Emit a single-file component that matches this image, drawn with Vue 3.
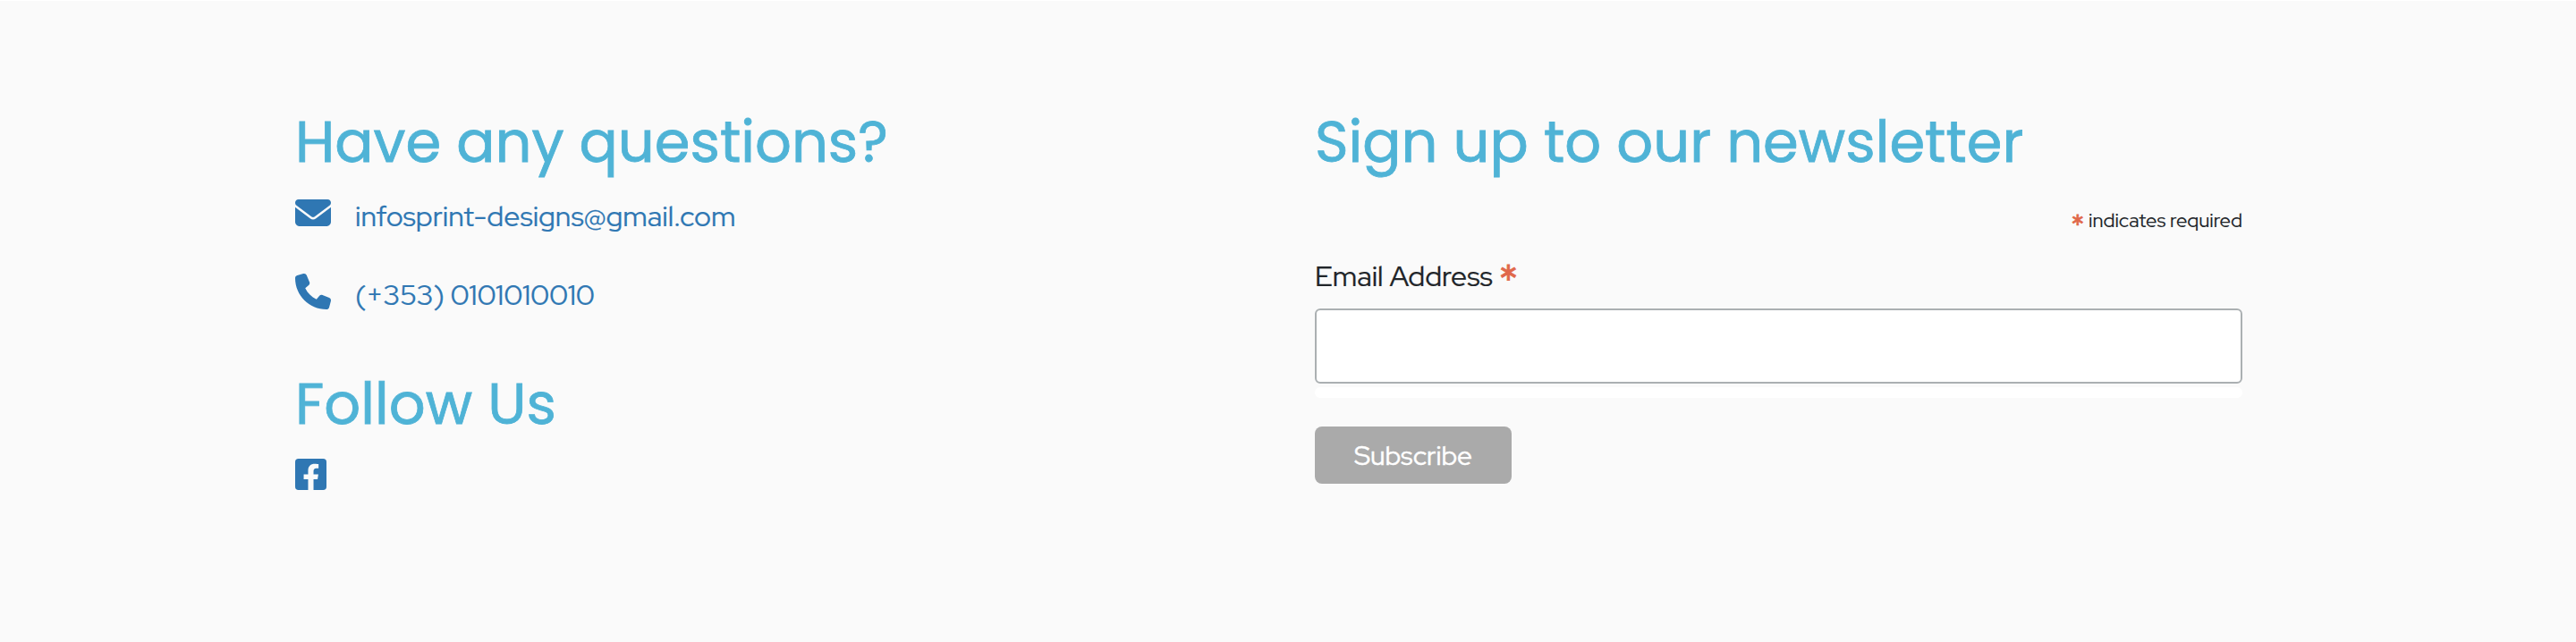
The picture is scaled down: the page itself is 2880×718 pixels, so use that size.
<script setup>
import { ref } from 'vue'
const email = ref('')
</script>

<template>
  <footer class="footer">
    <section class="contact">
      <h2 class="title">Have any questions?</h2>
      <a class="line">
        <svg class="icon" viewBox="0 0 512 512"><path d="M48 64C21.500 64 0 85.500 0 112c0 15.100 7.100 29.300 19.200 38.400L236.800 313.600c11.400 8.500 27 8.500 38.400 0L492.800 150.400c12.100-9.100 19.200-23.300 19.200-38.400c0-26.500-21.500-48-48-48H48zM0 176V384c0 35.300 28.700 64 64 64H448c35.300 0 64-28.700 64-64V176L294.400 339.200c-22.800 17.100-54 17.100-76.800 0L0 176z" /></svg>
        <span>infosprint-designs@gmail.com</span>
      </a>
      <a class="line">
        <svg class="icon" viewBox="0 0 512 512"><path d="M164.900 24.600c-7.700-18.600-28-28.500-47.400-23.200l-88 24C12.100 30.200 0 46 0 64C0 311.400 200.600 512 448 512c18 0 33.800-12.100 38.600-29.500l24-88c5.300-19.400-4.600-39.700-23.200-47.400l-96-40c-16.300-6.800-35.200-2.100-46.300 11.600L304.700 368C234.300 334.700 177.300 277.700 144 207.300L193.300 167c13.700-11.200 18.400-30 11.600-46.300l-40-96z" /></svg>
        <span class="phone">(+353) 0101010010</span>
      </a>
      <h2 class="title follow">Follow Us</h2>
      <svg class="social" viewBox="0 32 448 448"><path d="M400 32H48A48 48 0 0 0 0 80v352a48 48 0 0 0 48 48h137.250V327.690h-63V256h63v-54.640c0-62.150 37-96.480 93.670-96.480 27.140 0 55.520 4.840 55.520 4.840v61h-31.270c-30.810 0-40.420 19.120-40.420 38.730V256h68.780l-11 71.690h-57.780V480H400a48 48 0 0 0 48-48V80a48 48 0 0 0-48-48z" /></svg>
    </section>

    <form class="newsletter" @submit.prevent>
      <h2 class="title">Sign up to our newsletter</h2>
      <p class="required"><span class="star">*</span> indicates required</p>
      <label class="label" for="email">Email Address <span class="star">*</span></label>
      <input id="email" v-model="email" class="field" type="email">
      <div class="response"></div>
      <button class="subscribe" type="submit">Subscribe</button>
    </form>
  </footer>
</template>

<style>
body {
  background: #fafafa;
}
</style>

<style scoped>
.footer {
  box-sizing: border-box;
  height: 718px;
  display: grid;
  grid-template-columns: 1140px 1037px;
  padding: 119px 0 0 330px;
  background: #fafafa;
  border-top: 1px solid #fff;
  font-family: "Red Hat Display", Lato, sans-serif;
  font-size: 32px;
  line-height: 48px;
  color: #212529;
  -webkit-text-stroke: 0.2px currentColor;
}
.contact,
.newsletter {
  display: flex;
  flex-direction: column;
  align-items: flex-start;
}
.title {
  margin: 0;
  font-family: Poppins, Inter, sans-serif;
  font-weight: 400;
  font-size: 64px;
  line-height: 77px;
  color: #4fb3d6;
  -webkit-text-stroke: 0.8px currentColor;
}
.line {
  display: flex;
  gap: 27px;
  height: 48px;
  margin-top: 21px;
  color: #2f77b3;
}
.line + .line {
  margin-top: 40px;
}
.phone {
  letter-spacing: -0.15px;
}
.icon {
  width: 40px;
  height: 40px;
  fill: currentColor;
}
.follow {
  margin-top: 59px;
}
.social {
  width: 35px;
  height: 35px;
  margin-top: 22.5px;
  fill: #2f77b3;
}
.required {
  align-self: flex-end;
  margin: 33px 0 0;
  font-size: 22px;
  line-height: 34px;
  -webkit-text-stroke: 0.1px currentColor;
}
.star {
  position: relative;
  color: #e0684b;
  font-size: 150%;
  line-height: 0;
  -webkit-text-stroke: 0.8px currentColor;
}
.required .star {
  top: 9px;
}
.label {
  margin-top: 21px;
}
.label .star {
  top: 10px;
}
.field {
  box-sizing: border-box;
  width: 100%;
  height: 84px;
  margin-top: 12px;
  padding: 0 20px;
  border: 2px solid #abb0b2;
  border-radius: 6px;
  background: #fff;
  font: inherit;
}
.response {
  width: 100%;
  height: 12px;
  margin-top: 4px;
  background: #fff;
  border-radius: 6px;
}
.subscribe {
  width: 220px;
  height: 64px;
  margin-top: 32px;
  padding: 0;
  border: 0;
  border-radius: 8px;
  background: #aaa;
  color: #fff;
  font-family: inherit;
  font-size: 30px;
  line-height: 64px;
  -webkit-text-stroke: 0.4px #fff;
}
</style>
